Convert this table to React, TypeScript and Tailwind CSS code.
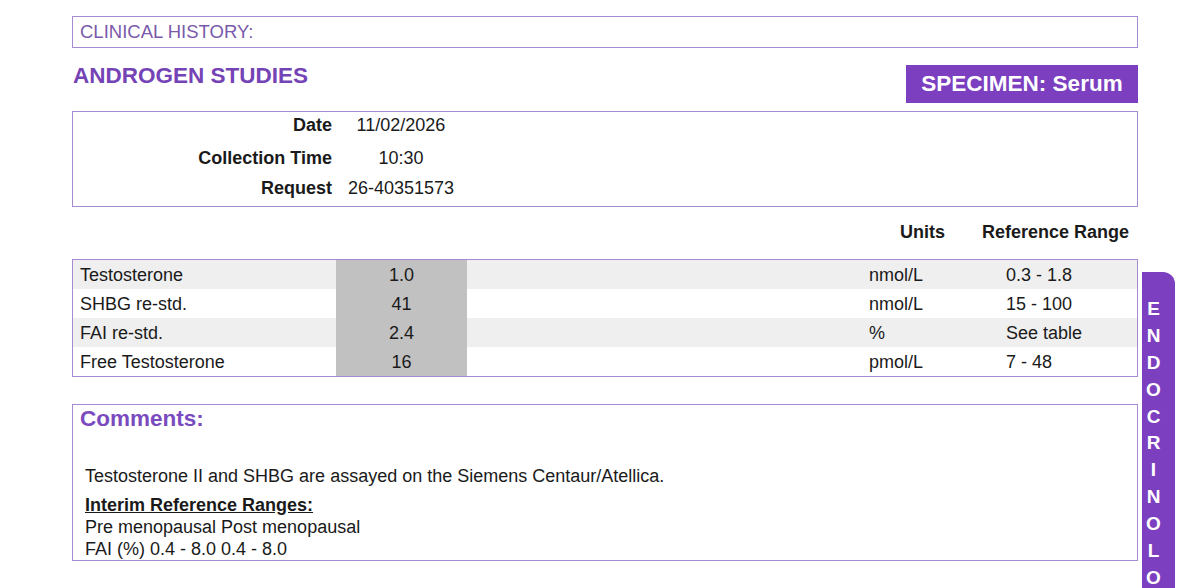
const rows = [
  { name: 'Testosterone', value: '1.0', units: 'nmol/L', range: '0.3 - 1.8' },
  { name: 'SHBG re-std.', value: '41', units: 'nmol/L', range: '15 - 100' },
  { name: 'FAI re-std.', value: '2.4', units: '%', range: 'See table' },
  { name: 'Free Testosterone', value: '16', units: 'pmol/L', range: '7 - 48' },
]

const tabLetters = ['E', 'N', 'D', 'O', 'C', 'R', 'I', 'N', 'O', 'L', 'O']

export default function App() {
  return (
    <div
      className="relative h-[588px] w-[1179px] overflow-hidden bg-white text-[18px] leading-[20px] text-[#1a1a1a]"
      style={{ fontFamily: '"Liberation Sans", Arial, sans-serif' }}
    >
      <div className="ml-[72px] w-[1066px] pt-[16px]">
        <div className="flex h-[32px] items-center border border-[#a68bd0] px-[7px] text-[18.5px] text-[#7a5aaa]">
          CLINICAL HISTORY:
        </div>

        <div className="mt-[17px] flex items-start justify-between">
          <h2 className="mt-[-2px] pl-[1px] text-[22.5px] leading-[26px] font-bold text-[#7443b5]">ANDROGEN STUDIES</h2>
          <div className="flex h-[38px] w-[232px] items-center justify-center bg-[#7b3fbf] text-[22.5px] font-bold text-white">
            SPECIMEN: Serum
          </div>
        </div>

        <div className="mt-[8px] h-[96px] border border-[#a68bd0] pt-[3px]">
          <div className="flex h-[20px] items-center">
            <span className="w-[259px] text-right font-bold">Date</span>
            <span className="ml-[8px] w-[122px] text-center">11/02/2026</span>
          </div>
          <div className="mt-[13px] flex h-[20px] items-center">
            <span className="w-[259px] text-right font-bold">Collection Time</span>
            <span className="ml-[8px] w-[122px] text-center">10:30</span>
          </div>
          <div className="mt-[10px] flex h-[20px] items-center">
            <span className="w-[259px] text-right font-bold">Request</span>
            <span className="ml-[8px] w-[122px] text-center">26-40351573</span>
          </div>
        </div>

        <div className="mt-[15px] flex h-[20px] items-center justify-end gap-[37px] pr-[9px] font-bold">
          <span>Units</span>
          <span>Reference Range</span>
        </div>

        <div className="mt-[17px] border border-[#a68bd0]">
          {rows.map((r, i) => (
            <div
              key={r.name}
              className={`grid h-[29px] grid-cols-[263px_131px_402px_137px_1fr] items-center ${
                i % 2 === 0 ? 'bg-[#efefef]' : 'bg-white'
              }`}
            >
              <span className="pl-[7px]">{r.name}</span>
              <span className="flex h-full items-center justify-center bg-[#c1c1c1]">{r.value}</span>
              <span />
              <span>{r.units}</span>
              <span>{r.range}</span>
            </div>
          ))}
        </div>

        <div className="mt-[27px] h-[157px] border border-[#a68bd0]">
          <h3 className="pt-[1px] pl-[7px] text-[22.5px] leading-[26px] font-bold text-[#7a4bbf]">Comments:</h3>
          <div className="pl-[12px]">
            <p className="mt-[34px]">Testosterone II and SHBG are assayed on the Siemens Centaur/Atellica.</p>
            <p className="mt-[9px] font-bold underline">Interim Reference Ranges:</p>
            <p className="mt-[2px]">Pre menopausal Post menopausal</p>
            <p className="mt-[2px]">FAI (%) 0.4 - 8.0 0.4 - 8.0</p>
          </div>
        </div>
      </div>

      <div className="absolute top-[272px] left-[1142px] flex h-[330px] w-[33px] flex-col items-center rounded-tr-[12px] bg-[#7b3fbf] pt-[26px] pr-[10px] text-[19px] font-bold text-white">
        {tabLetters.map((l, i) => (
          <span key={i} className="h-[26.9px] leading-[22px]">
            {l}
          </span>
        ))}
      </div>
    </div>
  )
}
